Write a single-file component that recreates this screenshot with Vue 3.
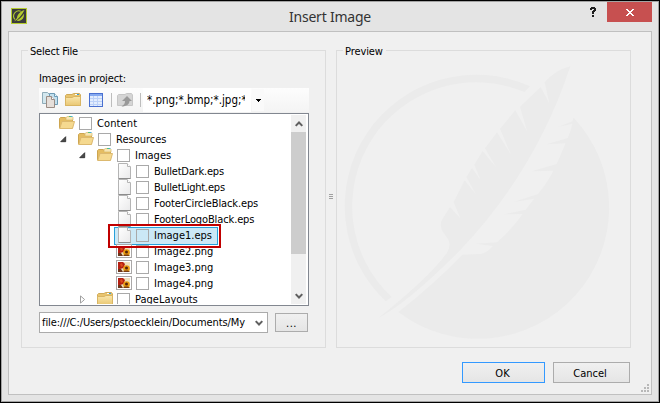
<script setup>
const rows = [
  { text: 'Content', depth: 0, icon: 'open', arrow: '', fit: 'wide' },
  { text: 'Resources', depth: 1, icon: 'open', arrow: 'down', fit: 'normal' },
  { text: 'Images', depth: 2, icon: 'open', arrow: 'down', fit: 'normal' },
  { text: 'BulletDark.eps', depth: 3, icon: 'page', arrow: '', fit: 'tight' },
  { text: 'BulletLight.eps', depth: 3, icon: 'page', arrow: '', fit: 'tight' },
  { text: 'FooterCircleBlack.eps', depth: 3, icon: 'page', arrow: '', fit: 'snug' },
  { text: 'FooterLogoBlack.eps', depth: 3, icon: 'page', arrow: '', fit: 'snug' },
  { text: 'Image1.eps', depth: 3, icon: 'page', arrow: '', fit: 'normal', selected: true },
  { text: 'Image2.png', depth: 3, icon: 'picture', arrow: '', fit: 'normal' },
  { text: 'Image3.png', depth: 3, icon: 'picture', arrow: '', fit: 'normal' },
  { text: 'Image4.png', depth: 3, icon: 'picture', arrow: '', fit: 'normal' },
  { text: 'PageLayouts', depth: 2, icon: 'closed', arrow: 'right', fit: 'normal' },
]
</script>

<template>
  <div class="window">
    <header class="titlebar">
      <svg class="app-icon" width="16" height="16" viewBox="0 0 16 16">
        <rect x=".5" y=".5" width="15" height="15" fill="#3b3b3c" stroke="#b5cc2e" />
        <path d="M4 11.5A5.2 5.2 0 0 1 9.8 3.2" fill="none" stroke="#b5cc2e" stroke-width="1.1" />
        <path d="M13.5 2C10 3 6.300 6 6 10L3 13.600C7 11.500 11 7.500 13.500 2Z" fill="#b5cc2e" />
        <path d="M12.600 5.800C14 10 10 14 5.500 12.600C9 11 11.500 8.500 12.600 5.800Z" fill="#b5cc2e" />
      </svg>
      <h1>Insert Image</h1>
      <span class="help">
        <svg width="6" height="10" viewBox="0 0 6 10" fill="#1e1e1e" shape-rendering="crispEdges">
          <path d="M1 0H5V1H6V4H5V5H4V7H2V4H3V3H4V2H2V3H0V1H1ZM2 8H4V10H2Z" />
        </svg>
      </span>
      <span class="close">
        <svg width="8" height="7" viewBox="0 0 8 7" fill="#fff" shape-rendering="crispEdges">
          <path d="M0 0H2V1H3V2H5V1H6V0H8V1H7V2H6V3H5V4H6V5H7V6H8V7H6V6H5V5H3V6H2V7H0V6H1V5H2V4H3V3H2V2H1V1H0Z" />
        </svg>
      </span>
    </header>

    <main class="client">
      <div class="panels">
        <section class="group files">
          <span class="legend l-select">Select File</span>
          <div class="label">Images in project:</div>
          <div class="toolbar">
            <svg class="t-copy" width="16" height="16" viewBox="0 0 16 16">
              <path d="M.5.5H5.500L8.500 3.500V11.500H.5Z" fill="#d3e7ee" stroke="#8facb9" />
              <path d="M7.500 1.500H12.500L15.500 4.500V12.500H7.500Z" fill="#c3e0ee" stroke="#6d9bb5" />
              <path d="M12.500 1.500V4.500H15.500" fill="#eef8fc" stroke="#6d9bb5" />
              <path d="M4.500 4.500H9.500L12.500 7.500V15.500H4.500Z" fill="#e6dfda" stroke="#9b8d85" />
              <path d="M9.500 4.500V7.500H12.500" fill="#fff" stroke="#9b8d85" />
            </svg>
            <svg class="t-folder" width="16" height="16" viewBox="0 0 16 16">
              <use href="#folder-closed" />
            </svg>
            <svg class="t-grid" width="14" height="14" viewBox="0 0 14 14" shape-rendering="crispEdges">
              <rect x=".5" y=".5" width="13" height="13" fill="#e3edfd" stroke="#4a70d0" />
              <rect x="1" y="1" width="12" height="2" fill="#86aaf0" />
              <path d="M1 5.500H13M1 8.500H13M1 11.500H13M4.500 3V13M8.500 3V13" stroke="#bcd1f8" />
            </svg>
            <i class="sep s1"></i>
            <svg class="t-up" width="16" height="16" viewBox="0 0 16 16">
              <path d="M.5 3.500L1.500 2.500H8L9.500 1.500H14.500L15.500 3V13.500H.5Z" fill="#d5d5d5" stroke="#c6c6c6" />
              <path d="M10 4L15 9H12.500C12.500 12 9.500 14.500 4.500 14.500C7 13 8 11.500 8 9H5Z" fill="#999" />
            </svg>
            <i class="sep s2"></i>
            <div class="filter"><span>*.png;*.bmp;*.jpg;*</span></div>
            <div class="drop">
              <svg width="5" height="3" viewBox="0 0 5 3" shape-rendering="crispEdges"><path d="M0 0H5V1H4V2H3V3H2V2H1V1H0Z" /></svg>
            </div>
          </div>

          <div class="tree">
            <div class="rows">
              <div v-for="r in rows" :key="r.text" class="row" :class="['d' + r.depth, { selected: r.selected }]">
                <span class="arrow">
                  <svg v-if="r.arrow === 'down'" width="7" height="7" viewBox="0 0 7 7"><path d="M5.700.7V5.700H.7Z" fill="#4a4a4a" stroke="#262626" stroke-width=".8" /></svg>
                  <svg v-if="r.arrow === 'right'" width="7" height="9" viewBox="0 0 7 9"><path d="M1.500.9L5.600 4.500L1.500 8.100Z" fill="#fff" stroke="#a0a0a0" /></svg>
                </span>
                <span class="icon">
                  <svg v-if="r.icon === 'open'" width="16" height="16" viewBox="0 0 16 16">
                    <path d="M.5 13V3.500L1.500 2.500H6L7.500 3.500H13.500V13Z" fill="#e5bd62" stroke="#cda550" />
                    <path d="M7 4V2.500L8.500 1.500H13L14 2.500V5H7Z" fill="#f8e6b4" stroke="#d9b765" stroke-width=".7" />
                    <path d="M10 1.500H12" stroke="#55c07f" /><path d="M12 1.500H13.500" stroke="#45b0e2" />
                    <path d="M3 6.500H15.500L13.500 13.500H.700Z" fill="#f5d98f" stroke="#dcb96f" />
                  </svg>
                  <svg v-else-if="r.icon === 'closed'" width="16" height="16" viewBox="0 0 16 16">
                    <defs>
                      <linearGradient id="gold" x2="0" y2="1"><stop stop-color="#fae7ad" /><stop offset="1" stop-color="#e9c773" /></linearGradient>
                      <g id="folder-closed">
                        <path d="M.5 13.500V3.500L1.500 2.500H7L8.500 1.500H14.500L15.500 3V13.500Z" fill="#e9c56f" stroke="#d0aa58" />
                        <rect x="10" y="2" width="2" height="1" fill="#fff" /><rect x="12" y="2" width="2" height="1" fill="#2f9fe0" />
                        <path d="M.5 5.500H7L9 4.500H15.500V13.500H.5Z" fill="url(#gold)" stroke="#d9b563" />
                      </g>
                    </defs>
                    <use href="#folder-closed" />
                  </svg>
                  <svg v-else-if="r.icon === 'page'" width="16" height="16" viewBox="0 0 16 16">
                    <defs><linearGradient id="sheet" x2="1" y2="1"><stop stop-color="#fff" /><stop offset="1" stop-color="#e9e9ea" /></linearGradient></defs>
                    <path d="M2.500.5H11L14.500 4V15.500H2.500Z" fill="url(#sheet)" stroke="#b4b4b4" />
                    <path d="M2.500 15.500H14.500" stroke="#8c8c8c" />
                    <path d="M11.500 .5V3.500H14.500" fill="#fff" stroke="#b4b4b4" />
                  </svg>
                  <svg v-else width="16" height="16" viewBox="0 0 16 16">
                    <rect x=".5" y="1.500" width="15" height="13" fill="#fff" stroke="#aaa8a8" />
                    <rect x="2" y="3" width="12" height="10" fill="#efe0bb" />
                    <path d="M2 3H7L9 5L7.500 9L4 10H2Z" fill="#b51f12" />
                    <path d="M4 5L6 4L7 7L5 8Z" fill="#dd4c1b" />
                    <path d="M2 10H5L7 13H2Z" fill="#6b351a" />
                    <circle cx="10.500" cy="9.500" r="3.300" fill="#e99a10" />
                    <circle cx="10.500" cy="9" r="1.500" fill="#54240c" />
                    <path d="M7 13L8.500 11.500H12L14 13Z" fill="#7a3d10" />
                  </svg>
                </span>
                <i class="check"></i>
                <span class="name" :class="r.fit">{{ r.text }}</span>
              </div>
            </div>
            <div class="scroll">
              <div class="sb"><svg width="8" height="6" viewBox="0 0 8 6"><path d="M.7 4.900L4 1.500L7.300 4.900" fill="none" stroke="#606060" stroke-width="2" /></svg></div>
              <div class="thumb"></div>
              <div class="sb end"><svg width="8" height="6" viewBox="0 0 8 6"><path d="M.7 1.100L4 4.500L7.300 1.100" fill="none" stroke="#606060" stroke-width="2" /></svg></div>
            </div>
            <div class="callout"></div>
          </div>

          <div class="path-row">
            <div class="combo">
              <span>file:///C:/Users/pstoecklein/Documents/My</span>
              <svg width="8" height="6" viewBox="0 0 8 6"><path d="M.7 1.100L4 4.500L7.300 1.100" fill="none" stroke="#606060" stroke-width="2" /></svg>
            </div>
            <div class="btn browse">...</div>
          </div>
        </section>

        <div class="splitter"><i></i><i></i><i></i></div>

        <section class="group preview">
          <span class="legend l-preview">Preview</span>
          <svg width="293" height="296" viewBox="22 3 879 888" fill="#ebebeb">
            <path d="M168 754A394 394 0 0 1 601 109L584 126A372 372 0 0 0 186 741Z" />
            <path d="M732 203A394 394 0 0 1 206 786Q310 705 398 614Q430 612 454 612Q476 606 489 588L438 581L502 577Q545 540 579 492L524 493L588 479L613 446L552 456L625 432Q655 395 671 362L606 364L681 342L708 280L651 283L714 264Q724 244 728 221L686 231L728 214Z" />
            <path d="M722 49Q677 60 645 97L659 160L633 111L571 170L592 243L557 181L511 236L543 312L502 247L466 295L499 352L459 303L434 344L452 389L427 354L410 381L438 432L405 391L372 456L392 505L361 471L337 509Q326 532 349 559Q370 583 349 613Q290 690 146 804Q235 758 390 602Q620 360 722 49Z" />
          </svg>
        </section>
      </div>

      <footer class="actions">
        <div class="btn ok">OK</div>
        <div class="btn cancel">Cancel</div>
      </footer>
      <svg class="grip" width="8" height="8" viewBox="0 0 8 8" fill="#b8b8b8" shape-rendering="crispEdges">
        <path d="M6 0H8V2H6ZM3 3H5V5H3ZM6 3H8V5H6ZM0 6H2V8H0ZM3 6H5V8H3ZM6 6H8V8H6Z" />
      </svg>
    </main>
  </div>
</template>

<style>
body { background: #000; overflow: hidden; }
</style>

<style scoped>
* { box-sizing: border-box; }
svg { display: block; flex: none; }
.window {
  width: 660px; height: 403px; border: 1px solid #000; background: #e4e4e4;
  box-shadow: inset 0 0 0 1px #a3a3a3; padding: 1px;
  font: 11px/16px "DejaVu Sans Condensed", "DejaVu Sans", sans-serif; font-stretch: condensed;
  color: #000; white-space: nowrap;
}
.titlebar { height: 29px; display: flex; align-items: flex-start; padding: 0 6px 0 9px; }
.app-icon { margin-top: 6px; }
h1 { margin: 5px 0 0; flex: 1; font: 14px/20px "Noto Sans", sans-serif; color: #333; padding-left: 262px; letter-spacing: -.22px; }
.help { margin: 5px 11px 0 0; }
.close { width: 45px; height: 20px; background: #c75050; display: flex; align-items: center; justify-content: center; }
.client { position: relative; margin-left: 6px; width: 644px; height: 364px; border: 1px solid #c0c0c0; background: #f0f0f0; padding: 18px 20px 0 12px; }
.panels { display: flex; }
.group { position: relative; height: 298px; border: 1px solid #dcdcdc; }
.files { width: 305px; padding: 19px 17px 0; }
.preview { width: 295px; }
.legend { position: absolute; top: -7px; background: #f0f0f0; padding: 0 2px; }
.l-select { left: 6px; width: 52px; letter-spacing: -.2px; }
.l-preview { left: 6px; width: 43px; letter-spacing: -.1px; }
.label { height: 18px; line-height: 18px; letter-spacing: -.12px; }
.toolbar { width: 270px; height: 24px; display: flex; align-items: center; background: linear-gradient(#fdfdfd, #f4f4f4); margin-bottom: 1px; padding-left: 3px; }
.t-folder { margin-left: 7px; }
.t-grid { margin-left: 8px; }
.t-up { margin-left: 5px; }
.sep { width: 1px; height: 14px; background: #bdbdbd; }
.s1 { margin-left: 8px; }
.s2 { margin-left: 7px; }
.filter { margin-left: 2px; width: 108px; height: 24px; background: #fff; padding: 4px 0 0 4px; overflow: hidden; }
.filter span { display: block; width: 98px; overflow: hidden; font-size: 11.500px; letter-spacing: -.02px; }
.drop { width: 12px; height: 22px; background: #fafafa; margin-left: 1px; display: flex; align-items: center; justify-content: center; }
.tree { position: relative; width: 270px; height: 193px; border: 1px solid #828790; background: #fff; display: flex; padding: 1px; }
.rows { width: 250px; height: 189px; overflow: hidden; }
.row { height: 16px; display: flex; align-items: center; position: relative; }
.d1 { padding-left: 19px; }
.d2 { padding-left: 38px; }
.d3 { padding-left: 57px; }
.arrow { width: 18px; display: flex; justify-content: flex-end; padding-right: 11px; }
.icon { width: 16px; height: 16px; }
.check { width: 13px; height: 13px; border: 1px solid #a9a9a9; background: #fff; margin: 1px 5px 0 4px; }
.name { line-height: 16px; padding-top: 2px; }
.wide { letter-spacing: .12px; }
.normal { letter-spacing: 0; }
.snug { letter-spacing: -.12px; }
.tight { letter-spacing: -.2px; }
.selected::before { content: ""; position: absolute; left: 73px; top: 0; width: 102px; height: 16px; border: 1px solid #26a0da; background: #cbe8f6; }
.selected > * { position: relative; }
.selected .check { background: #cbe8f6; }
.scroll { width: 15px; height: 189px; background: #f0f0f0; display: flex; flex-direction: column; }
.sb { height: 17px; display: flex; align-items: center; justify-content: center; }
.thumb { height: 122px; background: #cdcdcd; }
.end { margin-top: auto; }
.callout { position: absolute; left: 68px; top: 110px; width: 113px; height: 24px; border: 2px solid #c00000; }
.path-row { display: flex; align-items: center; gap: 7px; margin-top: 6px; }
.combo { width: 229px; height: 21px; border: 1px solid #ababab; background: #fff; display: flex; align-items: center; justify-content: space-between; padding: 0 4px 0 2px; letter-spacing: -.1px; }
.btn { display: flex; align-items: center; justify-content: center; border: 1px solid #acacac; background: linear-gradient(#f0f0f0, #e5e5e5); }
.browse { width: 33px; height: 19px; letter-spacing: .5px; padding-top: 2px; }
.splitter { width: 10px; padding: 144px 3px 0; display: flex; flex-direction: column; gap: 1px; }
.splitter i { height: 1px; width: 4px; background: #a0a0a0; }
.actions { display: flex; justify-content: flex-end; gap: 8px; margin: 14px 1px 0 0; }
.ok { width: 83px; height: 21px; border-color: #3399ff; padding: 2px 2px 0 0; }
.cancel { width: 77px; height: 21px; padding: 2px 3px 0 0; }
.grip { position: absolute; right: 2px; bottom: 2px; }
</style>
